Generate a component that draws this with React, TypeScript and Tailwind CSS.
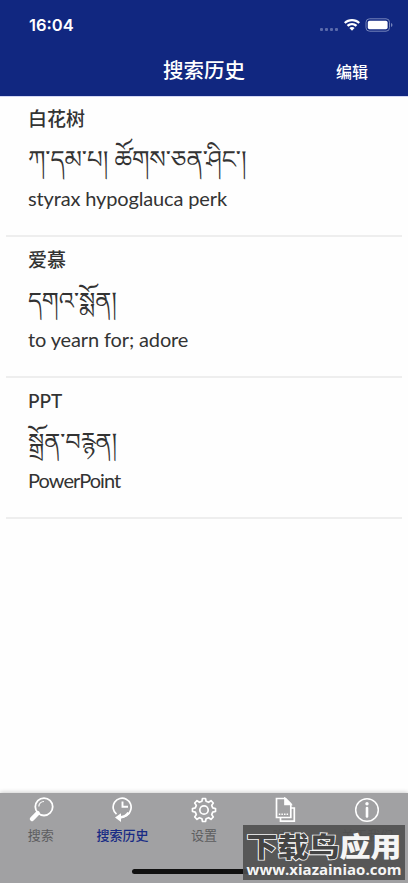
import React from 'react';

interface HistoryEntry {
  id: string;
  term: string;
  tibetan: string;
  english: string;
  tibetanSize: string;
  englishTracking: string;
}

const ENTRIES: HistoryEntry[] = [
  {
    id: 'styrax',
    term: '白花树',
    tibetan: 'ཀ་དམ་པ། ཚོགས་ཅན་ཤིང་།',
    english: 'styrax hypoglauca perk',
    tibetanSize: 'text-[24.500px]',
    englishTracking: 'tracking-[-0.14px]',
  },
  {
    id: 'yearn',
    term: '爱慕',
    tibetan: 'དགའ་སྨོན།',
    english: 'to yearn for; adore',
    tibetanSize: 'text-[24px]',
    englishTracking: 'tracking-[-0.13px]',
  },
  {
    id: 'ppt',
    term: 'PPT',
    tibetan: 'སྒྲོན་བརྙན།',
    english: 'PowerPoint',
    tibetanSize: 'text-[24px]',
    englishTracking: 'tracking-[-0.95px]',
  },
];

const StatusBar = (): React.JSX.Element => (
  <div className="flex h-[50px] items-center justify-between pl-[29px] pr-[15px]">
    <span className="font-['Inter',sans-serif] text-[16.500px] font-semibold leading-5">16:04</span>
    <div className="flex items-center">
      <div className="mr-[6px] mt-[9px] flex gap-[2px]">
        <span className="h-[3px] w-[3px] rounded-[1px] bg-[#5b6bab]" />
        <span className="h-[3px] w-[3px] rounded-[1px] bg-[#5b6bab]" />
        <span className="h-[3px] w-[3px] rounded-[1px] bg-[#5b6bab]" />
        <span className="h-[3px] w-[3px] rounded-[1px] bg-[#5b6bab]" />
      </div>
      <svg width="16" height="12" viewBox="0 0 16 12" fill="currentColor" aria-hidden="true">
        <path d="M8 0C4.900 0 2.100 1.200 0 3.200L1.600 4.800C3.300 3.200 5.500 2.200 8 2.200S12.700 3.200 14.400 4.800L16 3.200C13.900 1.200 11.100 0 8 0Z" />
        <path d="M8 4C6 4 4.100 4.800 2.700 6.100L4.300 7.700C5.300 6.800 6.600 6.200 8 6.200S10.700 6.800 11.700 7.700L13.300 6.100C11.900 4.800 10 4 8 4Z" />
        <path d="M8 7.900C7 7.900 6.100 8.300 5.400 8.900L8 11.700L10.600 8.900C9.900 8.300 9 7.900 8 7.900Z" />
      </svg>
      <svg className="ml-[5px]" width="28" height="14" viewBox="0 0 28 14" aria-hidden="true">
        <rect x="1" y=".8" width="23.500" height="12.400" rx="3.500" fill="none" stroke="#7584bb" />
        <rect x="2.800" y="2.700" width="19.800" height="8.600" rx="1.800" fill="white" />
        <path d="M26 5Q27.500 5.500 27.500 7T26 9Z" fill="#7584bb" />
      </svg>
    </div>
  </div>
);

const HistoryRow = ({ entry }: { entry: HistoryEntry }): React.JSX.Element => (
  <li className="mx-[6px] h-[141px] border-b-2 border-[#eeeeee] pl-[22px] pt-[9px] text-[#333333]">
    <h2 className="h-7 whitespace-nowrap font-['Lato','Noto_Sans_CJK_SC',sans-serif] text-[19px] font-medium leading-7">
      {entry.term}
    </h2>
    <p
      className={`mt-[14px] h-9 whitespace-nowrap font-['Noto_Serif_Tibetan','Noto_Sans_Tibetan','DejaVu_Sans',serif] leading-10 ${entry.tibetanSize}`}
    >
      {entry.tibetan}
    </p>
    <p
      className={`h-8 whitespace-nowrap font-['Lato',sans-serif] text-[20px] leading-[30px] ${entry.englishTracking}`}
    >
      {entry.english}
    </p>
  </li>
);

const SearchIcon = () => (
  <svg width="26" height="26" viewBox="0 0 26 26" fill="none" stroke="white" aria-hidden="true">
    <circle cx="16" cy="9.800" r="8.700" strokeWidth="1.800" />
    <path d="M10.800 9.500A5.300 5.300 0 0 1 16 4.500" strokeWidth="1.200" />
    <path d="M9.600 16.200L4 22" strokeWidth="4.500" strokeLinecap="round" />
  </svg>
);

const HistoryIcon = () => (
  <svg width="26" height="26" viewBox="0 0 26 26" fill="none" stroke="white" aria-hidden="true">
    <path d="M7.500 17.200A9 9 0 1 1 21.500 13.500C20.500 17.500 16 20.500 10 20.700" strokeWidth="1.700" />
    <path d="M19.500 15.500C18 18.500 15 20 10 20.700" strokeWidth="2.600" />
    <path d="M13.500 4.500V9.800H19" strokeWidth="1.900" />
    <path d="M6 20.600L12 16.300V25Z" fill="white" stroke="none" />
  </svg>
);

const GearIcon = () => (
  <svg width="26" height="26" viewBox="0 0 26 26" fill="none" stroke="white" strokeWidth="1.700" aria-hidden="true">
    <path
      strokeLinejoin="round"
      d="M10.900 4.300L11.500 1.500H14.500L15.100 4.300L17.600 5.300L20 3.700L22.300 6L20.700 8.400L21.700 10.900L24.500 11.500V14.500L21.700 15.100L20.700 17.600L22.300 20L20 22.300L17.600 20.700L15.100 21.700L14.500 24.500H11.500L10.900 21.700L8.400 20.700L6 22.300L3.700 20L5.300 17.600L4.300 15.100L1.500 14.500V11.500L4.300 10.900L5.300 8.400L3.700 6L6 3.700L8.400 5.300Z"
    />
    <circle cx="13" cy="13" r="4.200" />
  </svg>
);

const AppendixIcon = () => (
  <svg width="26" height="26" viewBox="0 0 26 26" fill="none" stroke="white" strokeWidth="1.700" aria-hidden="true">
    <path d="M3.500 1.500H12.500L17.800 6.800V20.500H3.500Z" />
    <path d="M12 1.500V7.300H17.800Z" fill="white" />
    <path d="M7.500 21V24.200H21.300V11H18" />
    <path d="M5.800 17.300H16" strokeDasharray="1.500 1.100" strokeWidth="1.600" />
  </svg>
);

const InfoIcon = () => (
  <svg width="26" height="26" viewBox="0 0 26 26" fill="none" stroke="white" aria-hidden="true">
    <circle cx="13" cy="13" r="11.300" strokeWidth="1.500" />
    <path d="M13 11V19.500" strokeWidth="2.600" strokeLinecap="round" />
    <circle cx="13" cy="6.800" r="1.700" fill="white" stroke="none" />
  </svg>
);

const TABS = [
  { label: '搜索', Icon: SearchIcon },
  { label: '搜索历史', Icon: HistoryIcon, active: true },
  { label: '设置', Icon: GearIcon },
  { label: '附录', Icon: AppendixIcon },
  { label: '关于我们', Icon: InfoIcon },
];

const TabBar = (): React.JSX.Element => (
  <nav className="relative h-[90px] bg-[#a1a1a3] shadow-[0_-1px_4px_rgba(0,0,0,0.18)]">
    <ul className="grid grid-cols-5">
      {TABS.map(({ label, Icon, active }) => (
        <li key={label} className="flex flex-col items-center pt-[4px]">
          <Icon />
          <span
            className={`mt-[2px] whitespace-nowrap font-['Noto_Sans_CJK_SC',sans-serif] text-[13px] leading-5 ${
              active ? 'font-medium text-[#182b85]' : 'text-[#5d5d5f]'
            }`}
          >
            {label}
          </span>
        </li>
      ))}
    </ul>
    <div className="mx-auto mt-[24px] h-[5px] w-[145px] rounded-full bg-[#111111]" />
    <Watermark />
  </nav>
);

const Watermark = (): React.JSX.Element => (
  <div className="absolute left-[243px] top-[32px] h-[55px] w-[162px] bg-[#4f4f4f]/90 text-[#f5f5f5]">
    <p className="mt-[5px] h-[32px] scale-y-[0.87] whitespace-nowrap text-center font-['Noto_Sans_CJK_SC',sans-serif] text-[31px] font-black leading-[32px]">
      <span className="text-[#444444] [-webkit-text-stroke:2px_#f5f5f5] [paint-order:stroke_fill]">下载鸟</span>
      <span>应用</span>
    </p>
    <p className="whitespace-nowrap text-center font-['Open_Sans',sans-serif] text-[15px] font-bold leading-[14px]">
      www.xiazainiao.com
    </p>
  </div>
);

export default function App(): React.JSX.Element {
  return (
    <div className="flex h-[883px] w-[408px] flex-col overflow-hidden bg-[#fefefe]">
      <header className="h-24 bg-[#112780] font-['Noto_Sans_CJK_SC',sans-serif] text-white">
        <StatusBar />
        <div className="grid h-[37px] grid-cols-[1fr_auto_1fr] items-center">
          <h1 className="col-start-2 whitespace-nowrap text-[20.500px] font-medium leading-9">搜索历史</h1>
          <button type="button" className="mr-[40px] mt-[5px] justify-self-end text-[16px] font-medium">
            编辑
          </button>
        </div>
      </header>
      <ul className="flex-1 shadow-[inset_0_1px_0_#d3d7f4]">
        {ENTRIES.map((entry) => (
          <HistoryRow key={entry.id} entry={entry} />
        ))}
      </ul>
      <TabBar />
    </div>
  );
}
